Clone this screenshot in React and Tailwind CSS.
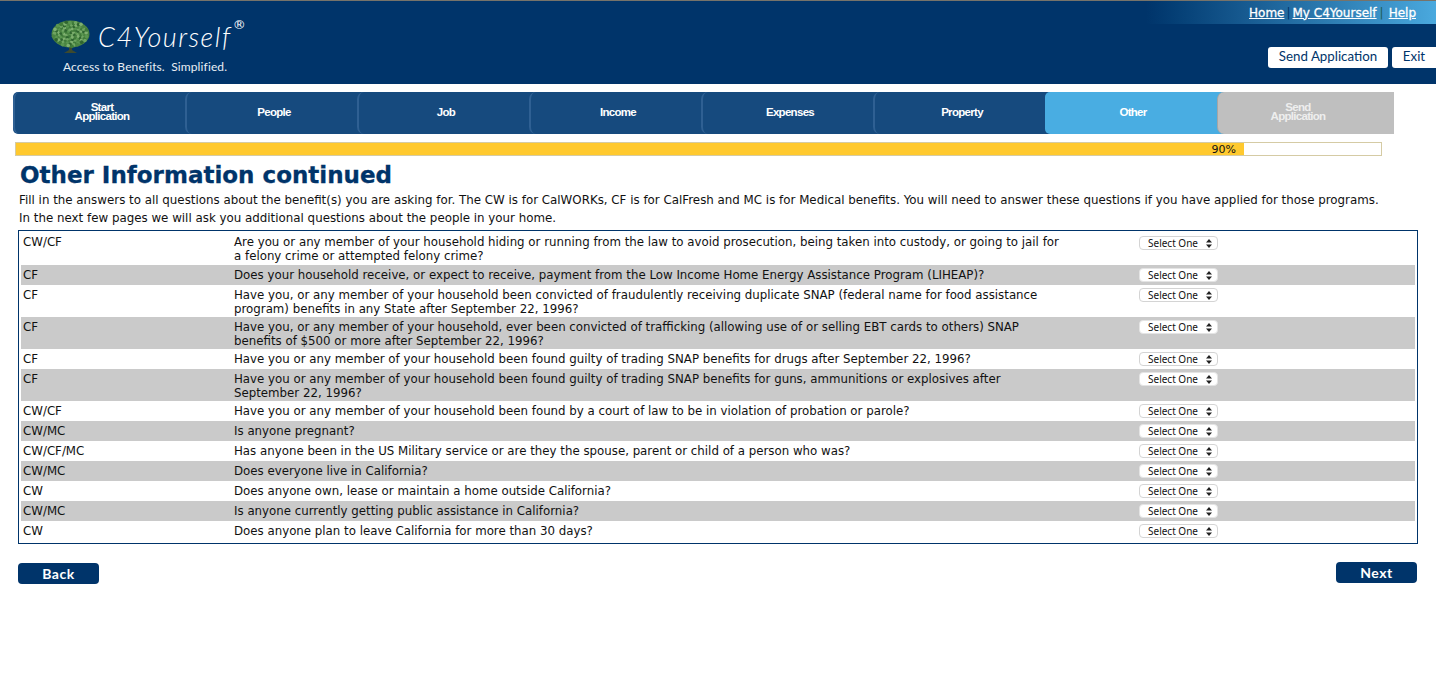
import React from 'react'

const tabs = [
  { label: ['Start', 'Application'], kind: 'done' },
  { label: ['People'], kind: 'done' },
  { label: ['Job'], kind: 'done' },
  { label: ['Income'], kind: 'done' },
  { label: ['Expenses'], kind: 'done' },
  { label: ['Property'], kind: 'done' },
  { label: ['Other'], kind: 'active' },
  { label: ['Send', 'Application'], kind: 'todo' },
]

const questions = [
  { code: 'CW/CF', h: 'h-[33px]', lines: ['Are you or any member of your household hiding or running from the law to avoid prosecution, being taken into custody, or going to jail for', 'a felony crime or attempted felony crime?'] },
  { code: 'CF', h: 'h-[20px]', lines: ['Does your household receive, or expect to receive, payment from the Low Income Home Energy Assistance Program (LIHEAP)?'] },
  { code: 'CF', h: 'h-[32px]', lines: ['Have you, or any member of your household been convicted of fraudulently receiving duplicate SNAP (federal name for food assistance', 'program) benefits in any State after September 22, 1996?'] },
  { code: 'CF', h: 'h-[32px]', lines: ['Have you, or any member of your household, ever been convicted of trafficking (allowing use of or selling EBT cards to others) SNAP', 'benefits of $500 or more after September 22, 1996?'] },
  { code: 'CF', h: 'h-[20px]', lines: ['Have you or any member of your household been found guilty of trading SNAP benefits for drugs after September 22, 1996?'] },
  { code: 'CF', h: 'h-[32px]', lines: ['Have you or any member of your household been found guilty of trading SNAP benefits for guns, ammunitions or explosives after', 'September 22, 1996?'] },
  { code: 'CW/CF', h: 'h-[20px]', lines: ['Have you or any member of your household been found by a court of law to be in violation of probation or parole?'] },
  { code: 'CW/MC', h: 'h-[20px]', lines: ['Is anyone pregnant?'] },
  { code: 'CW/CF/MC', h: 'h-[20px]', lines: ['Has anyone been in the US Military service or are they the spouse, parent or child of a person who was?'] },
  { code: 'CW/MC', h: 'h-[20px]', lines: ['Does everyone live in California?'] },
  { code: 'CW', h: 'h-[20px]', lines: ['Does anyone own, lease or maintain a home outside California?'] },
  { code: 'CW/MC', h: 'h-[20px]', lines: ['Is anyone currently getting public assistance in California?'] },
  { code: 'CW', h: 'h-[20px]', lines: ['Does anyone plan to leave California for more than 30 days?'] },
]

// leaf clusters for the tree, spread out by a fixed angle so it looks speckled
const leafColors = ['#3f7a3a', '#5a9650', '#2f6530', '#6fa562', '#4b8442', '#7fb070']
const leaves = Array.from({ length: 110 }, (_, i) => {
  const a = i * 2.399
  const r = Math.sqrt(i / 110)
  return {
    x: 19.5 + Math.cos(a) * r * 17.5,
    y: 14 + Math.sin(a) * r * 12.5,
    c: leafColors[(i * 7) % leafColors.length],
  }
})

const TreeLogo = () => (
  <svg width="40" height="36" viewBox="0 0 40 36">
    <path d="M18 22 L18 30 L13 33 L26 33 L21 30 L21 22 Z" fill="#3d4a2e" />
    <ellipse cx="19.5" cy="14" rx="19" ry="13.5" fill="#4b8442" />
    {leaves.map((l, i) => (
      <circle key={i} cx={l.x} cy={l.y} r="1.8" fill={l.c} />
    ))}
  </svg>
)

const Header = () => (
  <header className="relative h-[84px] border-t border-[#77736a] bg-[#00346a]">
    <div className="absolute right-0 top-0 flex h-[23px] w-[290px] items-center justify-end bg-gradient-to-r from-[#00346a] to-[#4aa9de] pr-[20px] font-['DejaVu_Sans',sans-serif] text-[12px] text-white [-webkit-text-stroke:0.3px_white]">
      <a className="underline">Home</a>
      <span className="mx-[2px] text-[#00346a] [-webkit-text-stroke:0]">|</span>
      <a className="underline">My C4Yourself</a>
      <span className="mx-[3px] text-[#1f5f5a] [-webkit-text-stroke:0]">|</span>
      <a className="ml-[2px] underline">Help</a>
    </div>
    <div className="flex pl-[51px] pt-[19px]">
      <div className="w-[47px]">
        <TreeLogo />
      </div>
      <div className="flex items-start pt-[2px]">
        <span className="font-['Lato',sans-serif] text-[27px] font-light italic leading-[30px] tracking-[1.5px] text-white">C4Yourself</span>
        <span className="ml-px mt-[-5px] text-[13px] leading-[16px] text-white">®</span>
      </div>
    </div>
    <div className="absolute left-[63px] top-[58px] font-['Lato',sans-serif] text-[12px] leading-[16px] tracking-[0.12px] text-[#e8eef4]">
      Access to Benefits.&nbsp; Simplified.
    </div>
    <div className="absolute right-0 top-[46px] flex gap-[4px] font-['Lato',sans-serif] text-[13.3px] text-[#00346a]">
      <button className="h-[21px] w-[120px] rounded-[3px] bg-white pb-[2px] leading-[17px]">Send Application</button>
      <button className="h-[21px] w-[44px] rounded-l-[3px] bg-white pb-[2px] leading-[17px]">Exit</button>
    </div>
  </header>
)

const TabLabel = ({ tab }) =>
  tab.label.map(line => <span key={line}>{line}</span>)

const Tabs = () => (
  <nav className="ml-[13px] mt-[8px] flex h-[42px] w-[1381px] overflow-hidden rounded-l-[5px] bg-[#164a7e] font-['Liberation_Sans',sans-serif] text-[11.5px] font-bold leading-[9px] tracking-[-0.7px] text-white">
    {tabs.map((tab, i) => {
      if (tab.kind === 'todo') {
        return (
          <div key={i} className="h-full w-[177px] bg-[#49ade2]">
            <div className="flex h-full flex-col items-center justify-center rounded-l-[7px] border-l border-[#a5a5a5] bg-[#bfbfbf] pb-[2px] pr-[16px] text-[#eeeeee]">
              <TabLabel tab={tab} />
            </div>
          </div>
        )
      }
      return (
        <div
          key={i}
          className={
            tab.kind === 'active'
              ? 'flex w-[172px] flex-col items-center justify-center rounded-l-[5px] bg-[#49ade2] pb-[2px] pl-[4px]'
              : 'flex w-[172px] flex-col items-center justify-center rounded-l-[7px] border-l-2 border-[#2f6093] pb-[2px] pl-[4px]'
          }
        >
          <TabLabel tab={tab} />
        </div>
      )
    })}
  </nav>
)

const Progress = () => (
  <div className="ml-[15px] mt-[8px] flex h-[14px] w-[1367px] border border-[#d5cba4] bg-white">
    <div className="flex w-[1228px] justify-end bg-[#ffc92e] pr-[8px] font-['DejaVu_Sans',sans-serif] text-[11px] leading-[13px] text-[#111]">90%</div>
  </div>
)

const Row = ({ q, i }) => (
  <div className={`${q.h} flex text-[11.8px] ${i % 2 === 1 ? 'bg-[#cacaca]' : 'bg-white'}`}>
    <div className="w-[213px] pl-[2px] pt-[3px] leading-[15px]">{q.code}</div>
    <div className="w-[905px] pt-[3px] leading-[14px]">
      {q.lines.map(line => (
        <div key={line} className="whitespace-nowrap">{line}</div>
      ))}
    </div>
    <div className={i === 0 ? 'pt-[4px]' : 'pt-[3px]'}>
      <div className={`flex h-[14px] w-[79px] items-center justify-between rounded-[4px] border bg-white pl-[8px] pr-[5px] font-['Noto_Sans',sans-serif] text-[10px] ${i % 2 === 1 ? 'border-[#e4e4e4]' : 'border-[#d4d4d4]'}`}>
        <span>Select One</span>
        <svg width="6" height="9" viewBox="0 0 6 9">
          <path d="M3 0 L6 3.5 L0 3.5 Z M3 9 L6 5.5 L0 5.5 Z" fill="#222" />
        </svg>
      </div>
    </div>
  </div>
)

export default function App() {
  return (
    <div className="min-h-[693px] bg-white font-['DejaVu_Sans',sans-serif] text-[11.85px] text-[#111]">
      <Header />
      <Tabs />
      <Progress />
      <h1 className="ml-[20px] mt-[4px] text-[23px] font-bold leading-[30px] text-[#00346a] [-webkit-text-stroke:0.3px_#00346a]">Other Information continued</h1>
      <div className="ml-[19px] mt-px leading-[18px]">
        <p className="whitespace-nowrap">Fill in the answers to all questions about the benefit(s) you are asking for. The CW is for CalWORKs, CF is for CalFresh and MC is for Medical benefits. You will need to answer these questions if you have applied for those programs.</p>
        <p className="whitespace-nowrap">In the next few pages we will ask you additional questions about the people in your home.</p>
      </div>
      <section className="ml-[18px] mt-[3px] w-[1400px] border border-[#00346a] px-[2px] pb-[2px] pt-[1px]">
        {questions.map((q, i) => (
          <Row key={i} q={q} i={i} />
        ))}
      </section>
      <div className="ml-[18px] mt-[18px] flex w-[1399px] items-start justify-between font-['Lato',sans-serif] text-[14px] font-bold tracking-[0.5px] text-white">
        <button className="mt-px h-[21px] w-[81px] rounded-[4px] bg-[#00346a]">Back</button>
        <button className="h-[21px] w-[81px] rounded-[4px] bg-[#00346a]">Next</button>
      </div>
    </div>
  )
}
